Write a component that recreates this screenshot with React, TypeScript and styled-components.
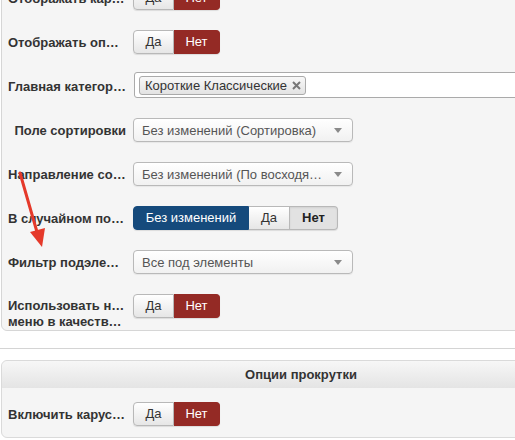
import React from 'react';
import styled, { createGlobalStyle } from 'styled-components';

const GlobalStyle = createGlobalStyle`
    html, body {
        margin: 0;
        padding: 0;
        background: #fff;
        overflow: hidden;
    }
    body {
        font-family: 'Liberation Sans', Arial, sans-serif;
        font-size: 13px;
        color: #333;
    }
`;

const Page = styled.div`
    position: relative;
    width: 515px;
    height: 440px;
    overflow: hidden;
`;

const Fieldset = styled.div`
    width: 600px;
    margin: -31px 0 0 1px;
    padding: 16px 0 0 6px;
    background: #f5f5f5;
    border: 1px solid #d6d6d6;
    border-radius: 0 0 6px 6px;
    display: grid;
    gap: 20px;
    box-sizing: border-box;
`;

const Divider = styled.hr`
    margin: 17px 0 10px;
    border: 0;
    border-top: 1px solid #d4d4d4;
    border-bottom: 1px solid #fff;
`;

const Panel = styled.div`
    width: 600px;
    margin-left: 1px;
    background: #f5f5f5;
    border: 1px solid #dadada;
    border-radius: 6px;
    box-sizing: border-box;
`;

const PanelHeader = styled.div`
    height: 27px;
    line-height: 27px;
    text-align: center;
    font-weight: bold;
    color: #333;
    background: linear-gradient(#f7f7f7, #e4e4e4);
    border-radius: 6px 6px 0 0;
`;

const PanelBody = styled.div`
    padding: 14px 0 11px 6px;
`;

const Row = styled.div`
    display: flex;
    align-items: flex-start;
`;

const Label = styled.div<{ $align?: 'left' | 'right' }>`
    width: 118px;
    margin-right: 7px;
    padding-top: 4px;
    font-weight: bold;
    line-height: 17px;
    text-align: ${(p) => p.$align || 'left'};
    white-space: nowrap;
    overflow: hidden;
    text-overflow: ellipsis;
`;

const LabelLine = styled.span`
    display: block;
    line-height: 16px;
    overflow: hidden;
    text-overflow: ellipsis;
`;

const Toggle = styled.div`
    display: inline-flex;
    height: 24px;
    border-radius: 4px;
    box-shadow: 0 1px 1px rgba(0, 0, 0, 0.1);
`;

const ToggleBtn = styled.div<{ $state?: 'off' | 'danger' | 'primary' | 'pressed'; $w: number }>`
    width: ${(p) => p.$w}px;
    box-sizing: border-box;
    line-height: 22px;
    text-align: center;
    font-size: 13px;
    border: 1px solid #b8b8b8;
    border-left-width: 0;
    color: #333;
    background: linear-gradient(#ffffff, #e6e6e6);

    &:first-child {
        border-left-width: 1px;
        border-radius: 4px 0 0 4px;
    }
    &:last-child {
        border-radius: 0 4px 4px 0;
    }

    ${(p) =>
        p.$state === 'danger' &&
        `
        background: #942a25;
        border-color: #942a25;
        color: #fff;
    `}
    ${(p) =>
        p.$state === 'primary' &&
        `
        background: #154a7c;
        border-color: #154a7c;
        color: #fff;
    `}
    ${(p) =>
        p.$state === 'pressed' &&
        `
        background: #e2e2e2;
        color: #222;
        font-weight: bold;
        box-shadow: inset 0 1px 2px rgba(0,0,0,0.08);
    `}
`;

const Select = styled.div`
    width: 220px;
    height: 24px;
    box-sizing: border-box;
    padding: 0 10px 0 8px;
    display: flex;
    align-items: center;
    justify-content: space-between;
    border: 1px solid #b9b9b9;
    border-radius: 4px;
    background: linear-gradient(#ffffff, #f1f1f1);
    box-shadow: 0 1px 1px rgba(0, 0, 0, 0.06);
    color: #555;
    font-size: 13px;
`;

const Caret = styled.span`
    width: 0;
    height: 0;
    border-left: 4px solid transparent;
    border-right: 4px solid transparent;
    border-top: 5px solid #8a8a8a;
`;

const MultiSelect = styled.div`
    flex: 1;
    height: 26px;
    box-sizing: border-box;
    margin: -2px 0 0 1px;
    padding: 2px 4px;
    display: flex;
    align-items: center;
    border: 1px solid #aaa;
    border-radius: 3px 0 0 3px;
    background: #fff;
`;

const Chip = styled.span`
    display: inline-flex;
    align-items: center;
    gap: 5px;
    height: 19px;
    padding: 0 4px 0 5px;
    box-sizing: border-box;
    border: 1px solid #aaa;
    border-radius: 3px;
    background: linear-gradient(#f8f8f8, #e3e3e3);
    color: #333;
    font-size: 13px;
`;

const Arrow = styled.svg`
    position: absolute;
    left: 0;
    top: 0;
    pointer-events: none;
`;

type Btn = { text: string; w: number; state?: 'off' | 'danger' | 'primary' | 'pressed' };

const yesNo: Btn[] = [
    { text: 'Да', w: 41 },
    { text: 'Нет', w: 46, state: 'danger' },
];

const ToggleGroup = ({ items }: { items: Btn[] }) => (
    <Toggle>
        {items.map((b) => (
            <ToggleBtn key={b.text} $w={b.w} $state={b.state}>
                {b.text}
            </ToggleBtn>
        ))}
    </Toggle>
);

const Dropdown = ({ value }: { value: string }) => (
    <Select>
        <span>{value}</span>
        <Caret />
    </Select>
);

export default function App() {
    return (
        <Page>
            <GlobalStyle />
            <Fieldset>
                <Row>
                    <Label>Отображать карточки</Label>
                    <ToggleGroup items={yesNo} />
                </Row>
                <Row>
                    <Label>Отображать описание</Label>
                    <ToggleGroup items={yesNo} />
                </Row>
                <Row>
                    <Label>Главная категория</Label>
                    <MultiSelect>
                        <Chip>
                            Короткие Классические
                            <svg width="9" height="9" viewBox="0 0 9 9">
                                <path d="M1 1L8 8M8 1L1 8" stroke="#777" strokeWidth="2" />
                            </svg>
                        </Chip>
                    </MultiSelect>
                </Row>
                <Row>
                    <Label $align="right">Поле сортировки</Label>
                    <Dropdown value="Без изменений (Сортировка)" />
                </Row>
                <Row>
                    <Label>Направление сортировки</Label>
                    <Dropdown value="Без изменений (По восходя…" />
                </Row>
                <Row>
                    <Label>В случайном порядке</Label>
                    <ToggleGroup
                        items={[
                            { text: 'Без изменений', w: 116, state: 'primary' },
                            { text: 'Да', w: 41 },
                            { text: 'Нет', w: 48, state: 'pressed' },
                        ]}
                    />
                </Row>
                <Row>
                    <Label>Фильтр подэлементов</Label>
                    <Dropdown value="Все под элементы" />
                </Row>
                <Row>
                    <Label>
                        <LabelLine>Использовать название</LabelLine>
                        <LabelLine>меню в качестве заголовка</LabelLine>
                    </Label>
                    <ToggleGroup items={yesNo} />
                </Row>
            </Fieldset>

            <Divider />

            <Panel>
                <PanelHeader>Опции прокрутки</PanelHeader>
                <PanelBody>
                    <Row>
                        <Label>Включить карусель</Label>
                        <ToggleGroup items={yesNo} />
                    </Row>
                </PanelBody>
            </Panel>

            <Arrow width="60" height="260">
                <line x1="20" y1="173" x2="37" y2="232" stroke="#e5392a" strokeWidth="3" strokeLinecap="round" />
                <polygon points="42,247 30,232 45,228" fill="#e5392a" />
            </Arrow>
        </Page>
    );
}
